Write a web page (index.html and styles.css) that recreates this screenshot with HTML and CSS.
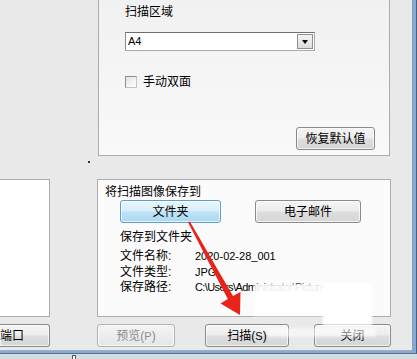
FILE: index.html
```
<!DOCTYPE html>
<html lang="zh-CN">
<head>
	<meta charset="UTF-8">
	<title>扫描设置</title>
	<link rel="stylesheet" href="styles.css">
</head>
<body>
	<div class="screen">
		<div class="frame">
			<div class="frame-inner">
				<div class="window">
					<!-- 扫描区域 -->
					<div class="top-row">
						<div class="group group-top">
							<div class="label">扫描区域</div>
							<div class="select"><span class="select-text">A4</span><span class="drop"></span></div>
							<div class="check"><span class="box"></span><span>手动双面</span></div>
							<button class="btn btn-reset">恢复默认值</button>
						</div>
					</div>
					<!-- 保存 -->
					<div class="mid-row">
						<div class="left-panel"></div>
						<div class="group group-save">
							<div class="label">将扫描图像保存到</div>
							<div class="target-btns">
								<button class="btn btn-active btn-folder">文件夹</button>
								<button class="btn btn-mail">电子邮件</button>
							</div>
							<div class="label sub">保存到文件夹</div>
							<div class="info">
								<span>文件名称:</span><span class="val">2020-02-28_001</span>
								<span>文件类型:</span><span class="val">JPG</span>
								<span>保存路径:</span><span class="val path">C:\Users\Administrator\Pictures</span>
							</div>
						</div>
					</div>
					<!-- 底部按钮 -->
					<div class="btn-row">
						<button class="btn btn-port">端口</button>
						<button class="btn btn-preview" disabled>预览(<span class="val">P</span>)</button>
						<button class="btn btn-scan">扫描(<span class="val">S</span>)</button>
						<button class="btn btn-close">关闭</button>
					</div>
				</div>
			</div>
		</div>
		<div class="strip"><span class="grip"></span></div>

		<!-- 覆盖层 -->
		<span class="dot"></span>
		<span class="patch patch1"></span>
		<span class="patch patch2"></span>
		<span class="patch patch3"></span>
		<svg class="arrow" width="417" height="359" viewBox="0 0 417 359">
			<polygon fill="#e8231a" points="189.9,221.5 233,296.1 240.5,292 240,315 220.5,303.5 227.8,298.9 188.1,222.5"/>
		</svg>
	</div>
</body>
</html>
```
FILE: styles.css
```
*{margin: 0;padding: 0;box-sizing: border-box;}
body{
	width: 417px;height: 359px;overflow: hidden;
	background: #d5dbe2;
	font: 12px/15px "Liberation Sans", "Noto Sans CJK SC", sans-serif;
	color: #000;
}
.screen{position: relative;width: 417px;height: 359px;}
.frame{width: 417px;height: 354px;border-right: 1px solid #4d5f78;border-bottom: 1px solid #5d6f88;}
.frame-inner{height: 100%;border-right: 3px solid #84abd8;border-bottom: 2px solid #84abd8;}
.window{
	height: 100%;display: flex;flex-direction: column;
	background: #e9e9e9;border-right: 1px solid #8d9cae;border-bottom: 1px solid #9fb0c3;
}
.label{line-height: 15px;white-space: nowrap;}
.val{font-size: 11px;}
.path{letter-spacing: -0.6px;}

/* 分组框 */
.group{border: 1px solid #acacac;}
.top-row{height: 156px;padding-left: 98px;}
.group-top{
	width: 292px;height: 156px;border-top: none;
	display: flex;flex-direction: column;align-items: flex-start;
	padding: 5px 14px 5px 26px;
	background: linear-gradient(#f1f1f1, #f9f9f9);
}
.select{
	width: 190px;height: 19px;margin-top: 12px;
	display: flex;align-items: center;justify-content: space-between;
	background: #fff;border: 1px solid #a9abb0;border-top-color: #6e6e6e;border-left-color: #8a8a8a;
	padding: 0 1px 0 2px;
}
.select-text{font-size: 11px;line-height: 15px;}
.drop{
	width: 16px;height: 15px;position: relative;
	background: linear-gradient(#f4f4f4, #dcdcdc);border: 1px solid #8f8f8f;
}
.drop::after{
	content: "";position: absolute;left: 4px;top: 5px;
	border-left: 3px solid transparent;border-right: 3px solid transparent;border-top: 4px solid #000;
}
.check{display: flex;align-items: center;gap: 6px;margin-top: 25px;height: 12px;line-height: 12px;}
.box{width: 12px;height: 12px;border: 1px solid #8e8f8f;border-right-color: #c4c4c4;border-bottom-color: #c4c4c4;background: linear-gradient(135deg, #e2e2e2, #fff);}
.btn-reset{width: 79px;margin-top: auto;align-self: flex-end;}

.mid-row{display: flex;height: 138px;margin-top: 23px;}
.left-panel{width: 50px;background: #fff;border: 1px solid #acacac;border-left: none;}
.group-save{
	width: 294px;margin-left: 47px;padding: 5px 0 0 7px;
	background: #fbfbfb;
}
.target-btns{display: flex;gap: 34px;padding-left: 15px;}
.btn-folder{width: 101px;}
.btn-mail{width: 106px;height: 22px;}
.sub{margin: 7px 0 0 15px;}
.info{display: grid;grid-template-columns: 75px 1fr;margin: 4px 0 0 15px;line-height: 15.5px;white-space: nowrap;}

/* 按钮 */
.btn{
	height: 23px;font: inherit;line-height: 20px;color: #000;
	border: 1px solid #8a8a8a;border-radius: 3px;
	background: linear-gradient(#f5f5f5 0%, #ececec 48%, #dedede 52%, #d5d5d5 100%);
	box-shadow: inset 0 0 0 1px rgba(255,255,255,.7);
}
.btn-active{
	border-color: #5d9fcb;
	background: linear-gradient(#e9f5fc 0%, #d8eefa 48%, #bfe3f6 52%, #acd8f1 100%);
}
.btn-row{display: flex;margin-top: 7px;height: 23px;}
.btn-port{width: 50px;border-left: none;border-radius: 0 3px 3px 0;text-align: left;padding-left: 0;}
.btn-preview{width: 78px;margin-left: 47px;color: #8b8b8b;border-color: #adb2b5;background: linear-gradient(#f4f4f4, #e6e6e6);}
.btn-scan{width: 84px;margin-left: 30px;}
.btn-close{width: 77px;margin-left: 25px;}

.strip{height: 5px;position: relative;}
.grip{position: absolute;left: 72px;top: 1px;width: 4px;height: 5px;background: #fff;border: 1px solid #555;border-bottom: none;}

/* 覆盖层 */
.dot{position: absolute;left: 88px;top: 161px;width: 2px;height: 2px;background: #333;}
.patch{position: absolute;background: #fff;filter: blur(1px);}
.patch1{left: 254px;top: 284px;width: 72px;height: 32px;background: rgba(255,255,255,.93);}
.patch2{left: 323px;top: 283px;width: 49px;height: 42px;}
.patch3{left: 268px;top: 328px;width: 108px;height: 9px;background: rgba(255,255,255,.55);}
.arrow{position: absolute;left: 0;top: 0;pointer-events: none;}
```
